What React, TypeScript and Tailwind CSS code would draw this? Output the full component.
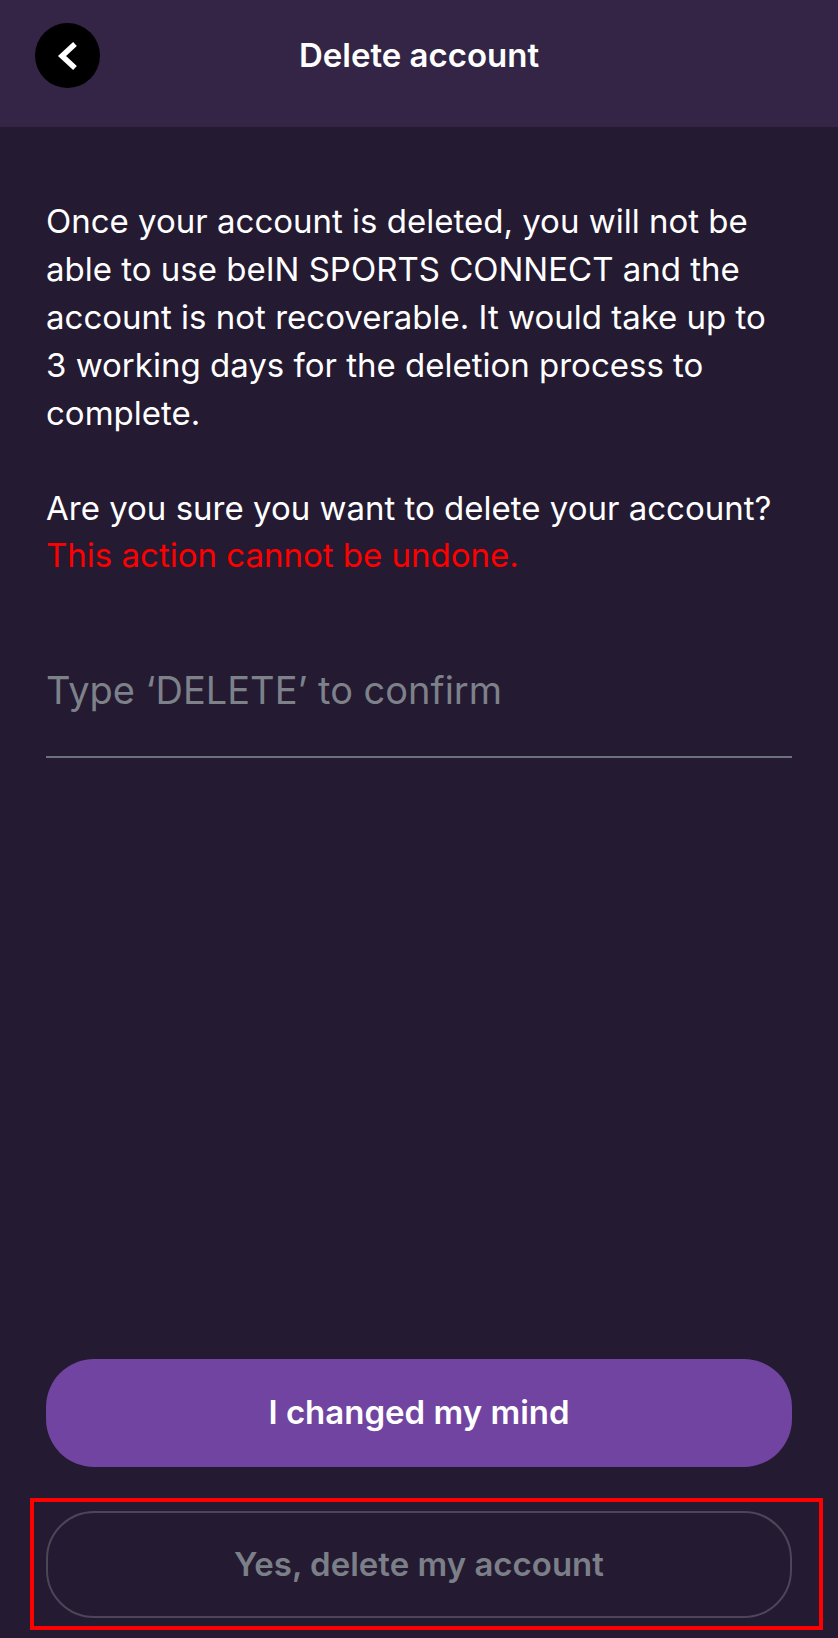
import React, { useState } from 'react';

const font = { fontFamily: 'Inter, "Noto Sans", sans-serif' };

const BackButton: React.FC = () => (
    <button className="ml-[35px] w-[65px] h-[65px] rounded-full bg-black flex items-center justify-center">
        <svg width="65" height="65" viewBox="0 0 65 65" fill="none">
            <path d="M40 21 L27 33 L40 45" stroke="#ffffff" strokeWidth="5.5" strokeLinecap="butt" strokeLinejoin="miter" />
        </svg>
    </button>
);

const App: React.FC = () => {
    const [confirmText, setConfirmText] = useState<string>('');

    return (
        <div className="min-h-[1638px] w-full flex flex-col bg-[#241a31] text-white" style={font}>
        <header className="h-[127px] bg-[#342546] shrink-0">
            <div className="h-[111px] grid grid-cols-[100px_1fr_100px] items-center">
            <BackButton />
            <h1 className="text-center text-[33px] font-semibold">Delete account</h1>
            <div />
            </div>
        </header>

        <main className="flex-1 flex flex-col px-[46px] pt-[70px]">
            <p className="text-[33px] leading-[48px] whitespace-nowrap">
            Once your account is deleted, you will not be
            <br />
            able to use beIN SPORTS CONNECT and the
            <br />
            account is not recoverable. It would take up to
            <br />
            3 working days for the deletion process to
            <br />
            complete.
            </p>
            <p className="mt-[48px] text-[33px] leading-[47px] whitespace-nowrap">
            Are you sure you want to delete your account?
            <br />
            <span className="text-[#ff0000]">This action cannot be undone.</span>
            </p>

            <input
            type="text"
            value={confirmText}
            onChange={(e) => setConfirmText(e.target.value)}
            placeholder="Type ‘DELETE’ to confirm"
            className="mt-[45px] h-[134px] w-full bg-transparent border-b-2 border-[#6d717b] text-[38px] text-white placeholder:text-[#7d818a] focus:outline-none"
            />

            <div className="flex-1" />

            <button className="h-[108px] w-full rounded-[48px] bg-[#7044a0] text-white text-[33px] font-semibold">
            I changed my mind
            </button>

            <div className="mt-[31px] mb-[8px] -ml-[16px] -mr-[31px] border-4 border-[#ff0000] pl-[12px] pr-[27px] pt-[9px] pb-[8px]">
            <button className="h-[107px] w-full rounded-[48px] border-2 border-[#4c4659] text-[#7b7f88] text-[33px] font-semibold">
                Yes, delete my account
            </button>
            </div>
        </main>
        </div>
    );
};

export default App;
